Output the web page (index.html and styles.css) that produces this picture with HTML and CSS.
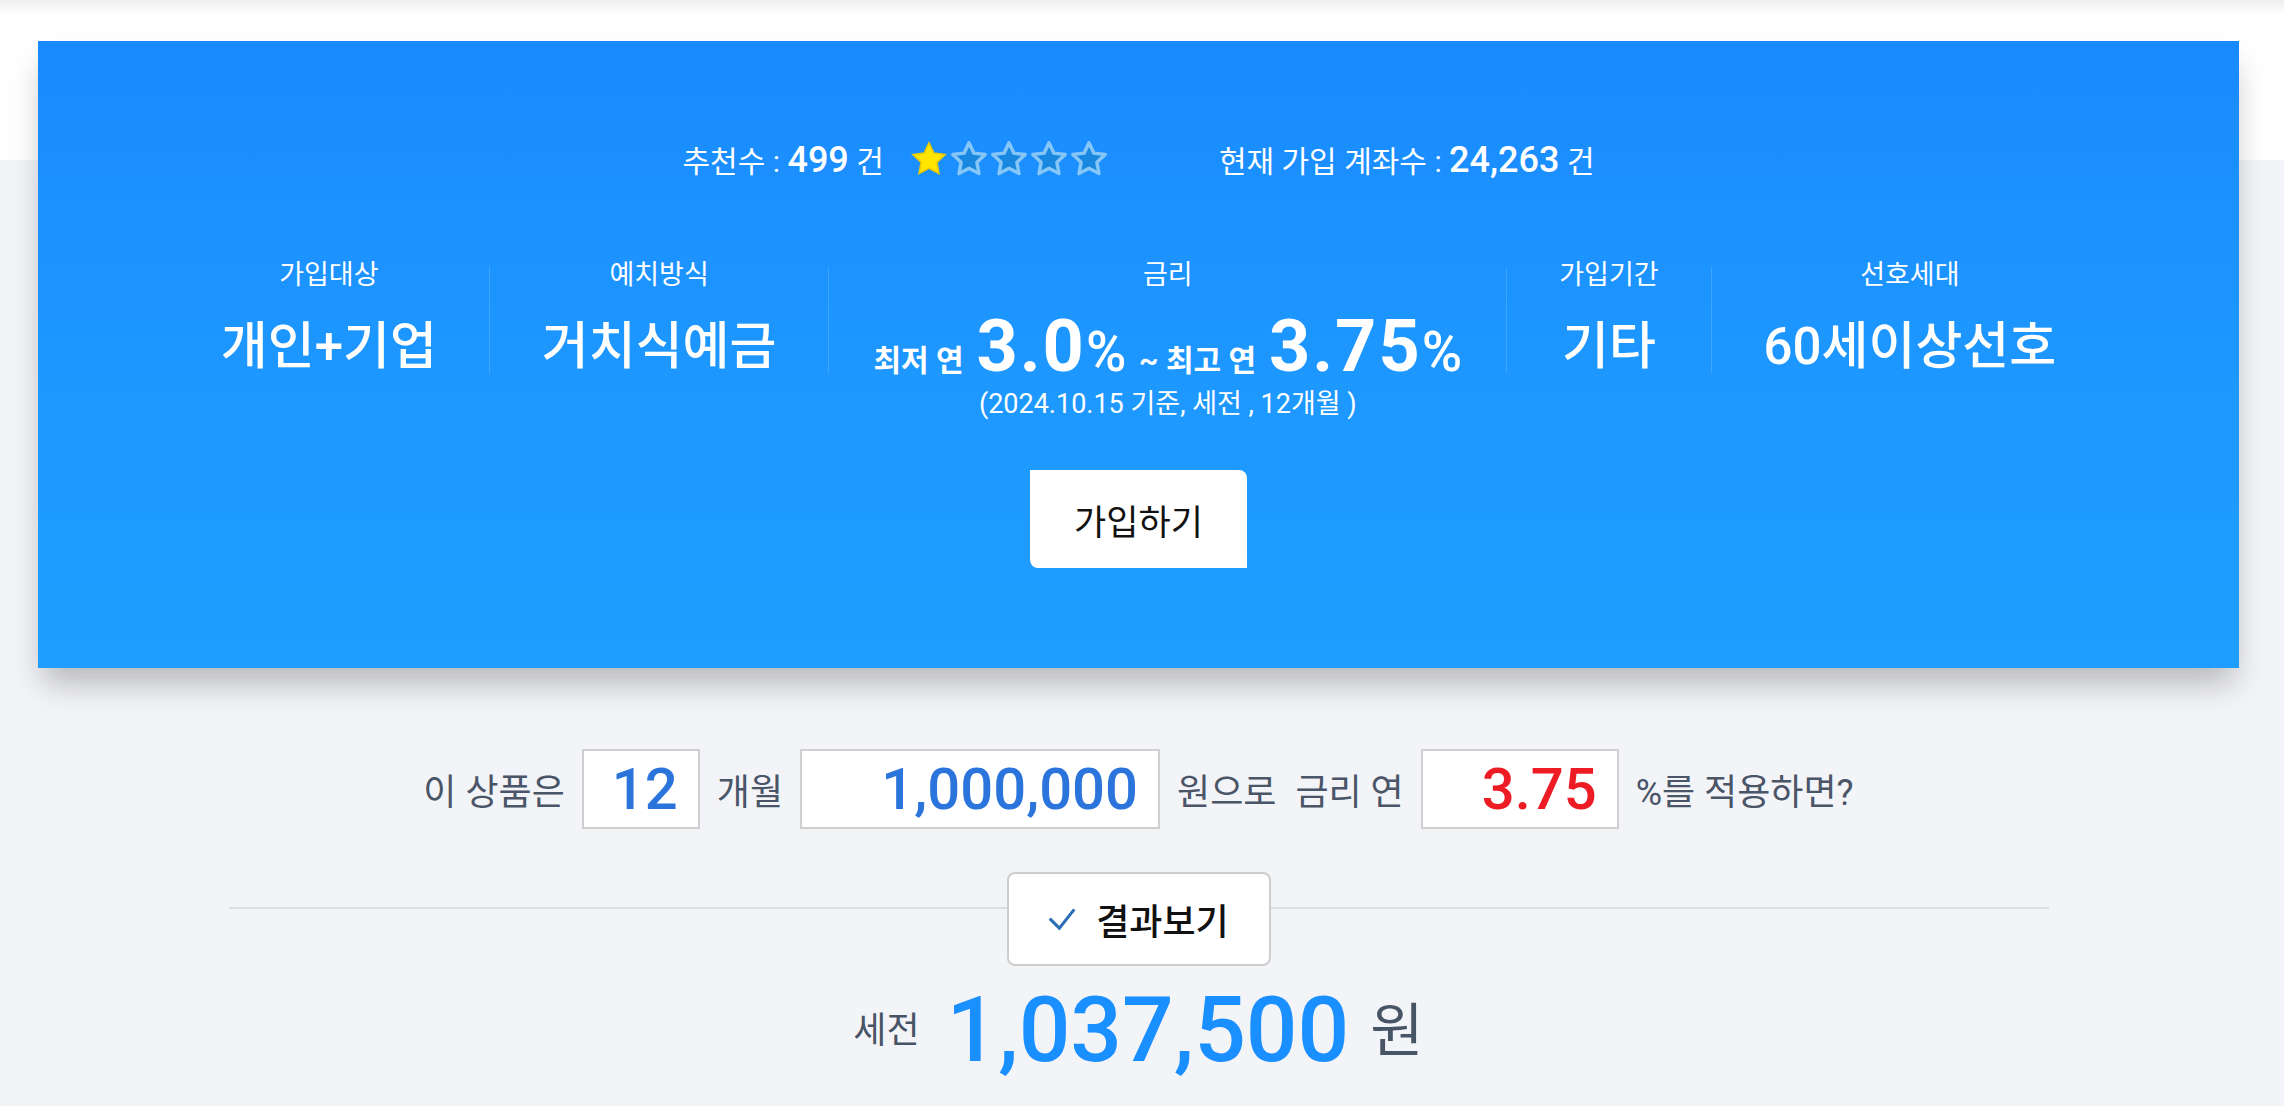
FILE: index.html
```html
<!DOCTYPE html>
<html lang="ko">
<head>
<meta charset="utf-8">
<title>상품 상세</title>
<link rel="stylesheet" href="styles.css">
</head>
<body>
<div class="page">
  <div class="wrap">
    <section class="hero">
      <div class="stats">
        <span class="stat">추천수 : <b>499</b> 건</span>
        <span class="stars">
          <svg viewBox="0 0 24 24"><path class="on" d="M12 1.8l3.1 6.5 7.1.9-5.2 4.9 1.3 7.1L12 17.8l-6.3 3.4 1.3-7.1-5.2-4.9 7.1-.9z"/></svg>
          <svg viewBox="0 0 24 24"><path class="off" d="M12 1.8l3.1 6.5 7.1.9-5.2 4.9 1.3 7.1L12 17.8l-6.3 3.4 1.3-7.1-5.2-4.9 7.1-.9z"/></svg>
          <svg viewBox="0 0 24 24"><path class="off" d="M12 1.8l3.1 6.5 7.1.9-5.2 4.9 1.3 7.1L12 17.8l-6.3 3.4 1.3-7.1-5.2-4.9 7.1-.9z"/></svg>
          <svg viewBox="0 0 24 24"><path class="off" d="M12 1.8l3.1 6.5 7.1.9-5.2 4.9 1.3 7.1L12 17.8l-6.3 3.4 1.3-7.1-5.2-4.9 7.1-.9z"/></svg>
          <svg viewBox="0 0 24 24"><path class="off" d="M12 1.8l3.1 6.5 7.1.9-5.2 4.9 1.3 7.1L12 17.8l-6.3 3.4 1.3-7.1-5.2-4.9 7.1-.9z"/></svg>
        </span>
        <span class="stat">현재 가입 계좌수 : <b>24,263</b> 건</span>
      </div>

      <div class="facts">
        <div class="fact">
          <div class="label">가입대상</div>
          <div class="value">개인+기업</div>
        </div>
        <i class="sep"></i>
        <div class="fact">
          <div class="label">예치방식</div>
          <div class="value">거치식예금</div>
        </div>
        <i class="sep"></i>
        <div class="fact rate">
          <div class="label">금리</div>
          <div class="value"><span class="sm">최저 연</span> <span class="big">3.0</span><span class="pct">%</span> <span class="sm">~ 최고 연</span> <span class="big">3.75</span><span class="pct">%</span></div>
          <div class="note">(2024.10.15 기준, 세전 , 12개월 )</div>
        </div>
        <i class="sep"></i>
        <div class="fact">
          <div class="label">가입기간</div>
          <div class="value">기타</div>
        </div>
        <i class="sep"></i>
        <div class="fact">
          <div class="label">선호세대</div>
          <div class="value">60세이상선호</div>
        </div>
      </div>

      <button class="join" type="button">가입하기</button>
    </section>

    <section class="calc">
      <div class="calc-row">
        <span>이 상품은</span>
        <div class="box months">12</div>
        <span>개월</span>
        <div class="box amount">1,000,000</div>
        <span class="wide">원으로</span>
        <span>금리 연</span>
        <div class="box rate-box">3.75</div>
        <span>%를 적용하면?</span>
      </div>

      <div class="result-bar">
        <span class="line"></span>
        <button class="result-btn" type="button">
          <svg class="check" viewBox="0 0 32 26"><path d="M2 12.5 L13 23.5 L30 2"/></svg>
          <span>결과보기</span>
        </button>
        <span class="line"></span>
      </div>

      <div class="result">
        <span class="pre">세전</span>
        <span class="sum">1,037,500</span>
        <span class="unit">원</span>
      </div>
    </section>
  </div>
</div>
</body>
</html>
```

FILE: styles.css
```css
* {
  box-sizing: border-box;
}

html, body {
  margin: 0;
  padding: 0;
}

body {
  background: #f3f4f8;
  font-family: Roboto, "Noto Sans CJK KR", sans-serif;
}

.page {
  background: linear-gradient(#eeeeee 0, #ffffff 14px, #ffffff 160px, #f3f4f8 160px);
  padding-top: 41px;
  min-height: 100vh;
}

.wrap {
  margin: 0 45px 0 38px;
}

/* ---------- hero card ---------- */
.hero {
  background: linear-gradient(180deg, #1a8aff 0%, #1d98ff 55%, #1f9eff 100%);
  color: #fff;
  padding: 98px 0 100px;
  box-shadow: 0 20px 30px -5px rgba(0, 0, 0, 0.25);
  display: flex;
  flex-direction: column;
  align-items: center;
}

.stats {
  display: flex;
  align-items: center;
  height: 40px;
  font-size: 30px;
  white-space: nowrap;
}

.stats b {
  font-size: 36px;
  font-weight: 500;
}

.stars {
  display: flex;
  gap: 2px;
  margin: 0 111px 0 26px;
}

.stars svg {
  width: 38px;
  height: 38px;
  display: block;
}

.stars .on {
  fill: #ffe600;
  stroke: #e9c900;
  stroke-width: 1;
}

.stars .off {
  fill: #1787e0;
  stroke: #86c6f6;
  stroke-width: 2.2;
  stroke-linejoin: round;
}

.facts {
  display: flex;
  align-items: flex-start;
  margin-top: 83px;
}

.fact {
  padding: 0 52px;
  text-align: center;
}

.label {
  font-size: 27px;
  line-height: 26px;
  height: 26px;
}

.value {
  font-size: 51px;
  line-height: 56px;
  height: 56px;
  margin-top: 31px;
  font-weight: 500;
  white-space: nowrap;
}

.sep {
  width: 1px;
  height: 106px;
  margin-top: 5px;
  background: rgba(255, 255, 255, 0.16);
}

.fact.rate {
  padding: 0 44px;
}

.rate .sm {
  font-size: 30px;
  font-weight: 700;
}

.rate .big {
  font-size: 72px;
  font-weight: 700;
  letter-spacing: 2px;
}

.rate .pct {
  font-size: 55px;
  font-weight: 500;
}

.note {
  font-size: 27px;
  line-height: 28px;
  margin-top: 15px;
  white-space: nowrap;
}

.join {
  margin-top: 52px;
  width: 217px;
  height: 98px;
  border: 0;
  background: #fff;
  border-radius: 0 8px 0 8px;
  font-family: "Noto Sans CJK KR", sans-serif;
  font-size: 35px;
  font-weight: 400;
  color: #111;
  padding: 0;
}

/* ---------- calculator ---------- */
.calc {
  width: 1820px;
  margin: 0 auto;
}

.calc-row {
  display: flex;
  justify-content: center;
  align-items: center;
  gap: 17px;
  margin-top: 81px;
  font-size: 36px;
  color: #4a5567;
  white-space: nowrap;
}

.calc-row .wide {
  margin-right: 2px;
}

.box {
  height: 80px;
  background: #fff;
  border: 2px solid #cfcfcf;
  text-align: right;
  padding-right: 20px;
  font-family: Roboto, sans-serif;
  font-size: 58px;
  line-height: 76px;
  font-weight: 500;
  color: #2a74dc;
}

.box.months {
  width: 118px;
}

.box.amount {
  width: 360px;
}

.box.rate-box {
  width: 198px;
  color: #ed1c24;
}

.result-bar {
  display: flex;
  align-items: flex-start;
  margin-top: 43px;
}

.line {
  flex: 1;
  height: 2px;
  margin-top: 35px;
  background: #dcdde1;
}

.result-btn {
  width: 264px;
  height: 94px;
  border: 2px solid #cdcdcd;
  border-radius: 8px;
  background: #fff;
  display: flex;
  align-items: center;
  justify-content: center;
  gap: 20px;
  padding: 0;
  font-family: "Noto Sans CJK KR", sans-serif;
  font-size: 36px;
  font-weight: 500;
  color: #111;
}

.check {
  width: 28px;
  height: 24px;
  display: block;
}

.check path {
  fill: none;
  stroke: #2c6fb6;
  stroke-width: 3.5;
}

.result {
  display: flex;
  justify-content: center;
  align-items: center;
  margin-top: 19px;
  line-height: 1;
  white-space: nowrap;
}

.result .pre {
  font-size: 36px;
  color: #475466;
  margin-right: 27px;
}

.result .sum {
  font-size: 91px;
  font-weight: 500;
  color: #1a8fff;
  margin-right: 21px;
}

.result .unit {
  font-size: 58px;
  color: #475466;
}
```
